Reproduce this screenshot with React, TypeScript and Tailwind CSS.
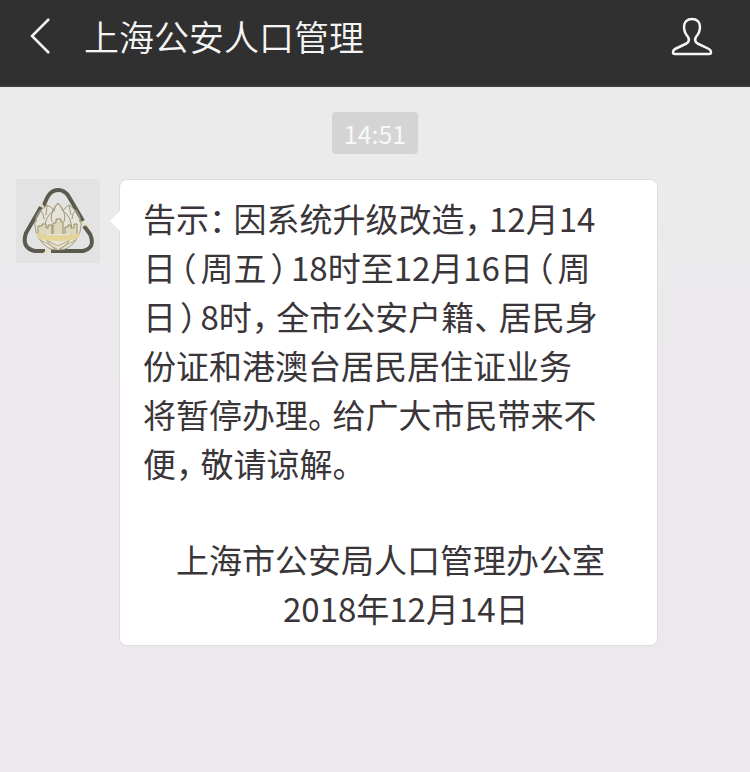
import React from 'react';

const noticeLines = [
  '告示：因系统升级改造，12月14',
  '日（周五）18时至12月16日（周',
  '日）8时，全市公安户籍、居民身',
  '份证和港澳台居民居住证业务',
  '将暂停办理。给广大市民带来不',
  '便，敬请谅解。',
];

const Emblem: React.FC = () => (
  <svg viewBox="0 0 84 84" className="h-full w-full" fill="none" role="img" aria-label="上海公安人口管理">
    <rect width="84" height="84" fill="#e4e3e4" />
    <g stroke="#5a5b4e" strokeWidth="4">
      <path d="M27 28 L31 19 Q35 11 42 11 Q49 11 53 18 L67 42" />
      <path d="M68 47 L74 55 Q80 69 67 72 L35 72" />
      <path d="M29 72 L19 72 Q5 69 10 54 L25 28" />
    </g>
    <g stroke="#e6dfba" strokeWidth="2">
      <path d="M24 23 L30 32" />
      <path d="M64 43 L73 47" />
      <path d="M27 75 L36 69" />
    </g>
    <ellipse cx="42" cy="48" rx="22" ry="23" fill="#e6e3d8" />
    <g stroke="#a09a80" strokeWidth="1">
      <path d="M31 26 Q15 36 20 53 Q25 67 37 71 M53 26 Q69 36 64 53 Q59 67 47 71" />
      <path d="M31 26 Q36 28 38 32 Q39 27 42 24 Q45 27 47 32 Q49 28 53 26" />
      <path d="M38 32 Q28 37 28 54 Q31 66 41 71 M47 32 Q56 37 56 54 Q53 66 43 71" />
      <path d="M31 26 L30 36 M53 26 L55 36 M42 24 Q33 33 36 43 M42 24 Q51 33 48 43" />
      <path d="M20 43 Q20 35 24 31 Q28 34 28 40 M64 43 Q64 35 60 31 Q56 34 56 40" />
    </g>
    <path
      d="M22 55 V47 H26 V45 H30 V49 H32 V46 H36 V55 M37 55 V44 H40 V40 H45 V43 H47 V55 M49 55 V48 H52 V46 H55 V49 H58 V45 H61 V55"
      stroke="#948d6b"
      strokeWidth="1"
      fill="#dcd7bd"
    />
    <path d="M20 54 Q42 59 64 54 L61 60 Q42 64 23 60 Z" fill="#e3d597" />
    <path d="M24 61 Q31 64 41 70 M60 61 Q53 64 43 70 M32 62 L42 67 L52 62" stroke="#b5aa76" strokeWidth="1" />
  </svg>
);

// Half-width punctuation, padded to three quarters of a character cell
const Punctuated: React.FC<{ text: string }> = ({ text }) => (
  <>
    {text.split(/([：，（）、。])/).map((part, i) => {
      if (i % 2 === 0) return part;
      const isParen = part === '（' || part === '）';
      return (
        <span key={i} className={isParen ? "px-1 [font-feature-settings:'halt']" : "pr-2 [font-feature-settings:'halt']"}>
          {part}
        </span>
      );
    })}
  </>
);

const Header: React.FC = () => (
  <header className="flex h-[87px] items-center border-b-2 border-[#3c3c3c] bg-[#303030] pr-9 pb-3.5 pl-7 text-[#f5f5f5]">
    <button type="button" aria-label="返回" className="flex h-10 w-7 items-center">
      <svg viewBox="0 0 28 40" className="h-10 w-7" fill="none" stroke="currentColor" strokeWidth="2.5">
        <path d="M21 3 L4 20 L21 37" />
      </svg>
    </button>
    <h1 className="ml-7 flex-1 text-[35px] leading-[50px] font-[350]">上海公安人口管理</h1>
    <button type="button" aria-label="公众号资料" className="flex h-11 w-11 items-center justify-center">
      <svg viewBox="0 0 44 44" className="h-11 w-11" fill="none" stroke="currentColor" strokeWidth="2.5" strokeLinejoin="round">
        <path d="M22 5 C17 5 14 8 14 13 C14 18 15.500 20 18 23 C19.500 25.500 19 28 16.500 29.500 L5 35 Q3 36 3 38.500 Q3 40 5 40 L39 40 Q41 40 41 38.500 Q41 36 39 35 L27.500 29.500 C25 28 24.500 25.500 26 23 C28.500 20 30 18 30 13 C30 8 27 5 22 5 Z" />
      </svg>
    </button>
  </header>
);

const App: React.FC = () => {
  return (
    <div className="min-h-screen bg-linear-to-b from-[#ebebeb] from-25% to-[#ece8ed] to-50% font-['Noto_Sans_CJK_SC',sans-serif]">
      <Header />
      <main className="px-4 pt-[25px]">
        <div className="flex justify-center">
          <time className="rounded bg-[#d4d4d4] px-3 text-[25px] leading-[42px] text-[#f8f8f8]">14:51</time>
        </div>
        <div className="mt-[25px] flex items-start pr-[76px]">
          <div className="h-[84px] w-[84px] shrink-0">
            <Emblem />
          </div>
          <div className="relative ml-[19px] min-w-0 flex-1 rounded-lg border border-[#dfdde0] bg-white pt-3.5 pr-12 pb-3 pl-[23px] text-[33px] leading-[49px] text-[#393539]">
            <span className="absolute top-[34px] -left-[7px] h-3.5 w-3.5 rotate-45 bg-white" />
            <p>
              {noticeLines.map((line) => (
                <span key={line} className="block">
                  <Punctuated text={line} />
                </span>
              ))}
            </p>
            <p className="mt-[47px] pl-[33px]">上海市公安局人口管理办公室</p>
            <p className="pl-[140px]">2018年12月14日</p>
          </div>
        </div>
      </main>
    </div>
  );
};

export default App;
